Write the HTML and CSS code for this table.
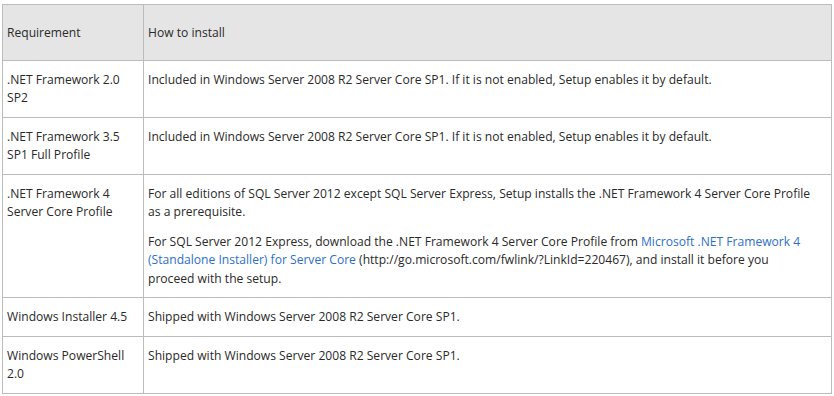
FILE: index.html
```html
<!DOCTYPE html>
<html lang="en">
<head>
  <meta charset="UTF-8">
  <title>SQL Server 2012 on Server Core - Prerequisites</title>
  <link rel="stylesheet" href="styles.css">
</head>
<body>
  <table class="req-table">
    <colgroup>
      <col class="col-req">
      <col class="col-how">
    </colgroup>
    <thead>
      <tr>
        <th>Requirement</th>
        <th>How to install</th>
      </tr>
    </thead>
    <tbody>
      <tr>
        <td>.NET Framework 2.0 SP2</td>
        <td>Included in Windows Server 2008 R2 Server Core SP1. If it is not enabled, Setup enables it by default.</td>
      </tr>
      <tr>
        <td>.NET Framework 3.5 SP1 Full Profile</td>
        <td>Included in Windows Server 2008 R2 Server Core SP1. If it is not enabled, Setup enables it by default.</td>
      </tr>
      <tr>
        <td>.NET Framework 4 Server Core Profile</td>
        <td>
          <p>For all editions of SQL Server 2012 except SQL Server Express, Setup installs the .NET Framework 4 Server Core Profile as a prerequisite.</p>
          <p>For SQL Server 2012 Express, download the .NET Framework 4 Server Core Profile from <a href="#">Microsoft .NET Framework 4 (Standalone Installer) for Server Core</a> (http://go.microsoft.com/fwlink/?LinkId=220467), and install it before you proceed with the setup.</p>
        </td>
      </tr>
      <tr>
        <td>Windows Installer 4.5</td>
        <td>Shipped with Windows Server 2008 R2 Server Core SP1.</td>
      </tr>
      <tr>
        <td>Windows PowerShell 2.0</td>
        <td>Shipped with Windows Server 2008 R2 Server Core SP1.</td>
      </tr>
    </tbody>
  </table>
</body>
</html>
```

FILE: styles.css
```css
body {
  margin: 0;
  padding: 4px 2px;
  background: #fff;
  font-family: 'Segoe UI', 'Open Sans', Arial, sans-serif;
  font-size: 12.1px;
  color: #2a2a2a;
}
.req-table {
  width: 830px;
  border-collapse: collapse;
  table-layout: fixed;
}
.col-req {
  width: 141px;
}
.req-table th, .req-table td {
  border: 1px solid #bcbcbc;
  text-align: left;
  vertical-align: top;
  line-height: 18.5px;
  padding: 10px 18px 9px 4px;
}
.req-table td:first-child {
  padding-right: 5px;
}
.req-table th {
  background: #e5e5e5;
  font-weight: 400;
  padding-top: 19px;
  padding-bottom: 17px;
}
.req-table p {
  margin: 0 0 11px 0;
}
.req-table p:last-child {
  margin-bottom: 0;
}
.req-table a {
  color: #2e6fc6;
  text-decoration: none;
}
```
